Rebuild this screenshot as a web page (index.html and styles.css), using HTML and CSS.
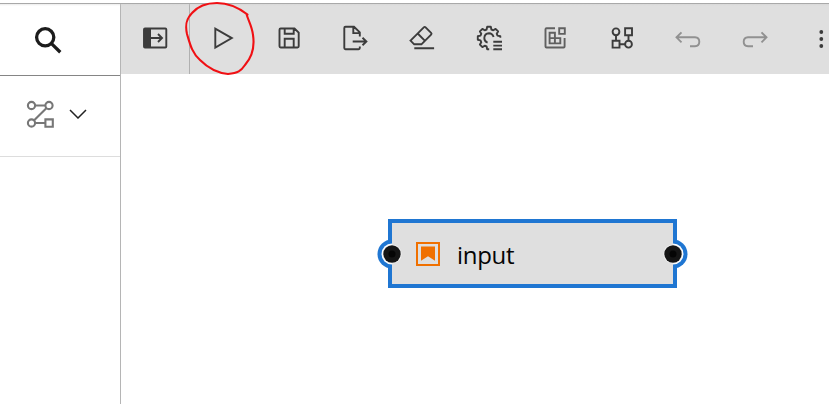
FILE: index.html
```html
<!DOCTYPE html>
<html lang="en">
<head>
<meta charset="utf-8">
<title>Flow editor</title>
<link rel="stylesheet" href="styles.css">
</head>
<body>
<div class="app">
  <aside class="sidebar">
    <div class="search">
      <svg class="icon search-icon" viewBox="0 0 32 32"><circle cx="13.2" cy="13.3" r="8.6" stroke-width="3.3"/><path d="M19.5 19.6l8.8 8.6" stroke-width="3.3"/></svg>
    </div>
    <div class="category">
      <svg class="icon route" viewBox="0 0 32 32"><circle cx="7.5" cy="7.5" r="3.6"/><circle cx="25" cy="7.5" r="3.6"/><circle cx="7.500" cy="25" r="3.6"/><path d="M11 7.500h10.400M22.300 10.200L10.200 22.300M11 25h10.300M21.400 21.400h7.400v7.400h-7.400z"/></svg>
      <svg class="chevron" viewBox="0 0 18 10"><path d="M1 1l8 8 8-8"/></svg>
    </div>
  </aside>
  <main class="main">
    <div class="toolbar">
      <button class="tool first" aria-label="Panel"><svg class="icon" viewBox="0 0 32 32"><rect x="5" y="6.500" width="22.300" height="19" rx="1"/><path class="fill" d="M5 6.500h7v19h-7z"/><path d="M12 16h11M19 12l4 4-4 4"/></svg></button>
      <button class="tool" aria-label="Run"><svg class="icon" viewBox="0 0 32 32"><path d="M9.300 6.700v18.800l16.500-9.400z"/></svg></button>
      <button class="tool" aria-label="Save"><svg class="icon" viewBox="0 0 32 32"><path d="M7.700 6.500h13.800l4.200 4.200v13.600q0 1.200-1.200 1.200H7.700q-1.200 0-1.200-1.200V7.700q0-1.200 1.200-1.200zM11.700 6.500v5.300h9V6.500M11.700 25.500v-8.800h9v8.800"/></svg></button>
      <button class="tool" aria-label="Export"><svg class="icon" viewBox="0 0 32 32"><path d="M20.800 14.500v-4.200L15 4.700H6.500q-1.200 0-1.200 1.200V26q0 1.200 1.200 1.200h13.100q1.200 0 1.200-1.200v-1.400M14.300 5v6.100h6.300M13.700 19.500h13.500M23.500 15.700l3.900 3.800-3.900 3.800"/></svg></button>
      <button class="tool" aria-label="Clear"><svg class="icon" viewBox="0 0 32 32"><path d="M4.500 18.600L17.800 5.300q.9-.9 1.800 0l5.500 5.500q.9.900 0 1.800L15.400 22.300H8.200zM11.700 11.500l7.300 7.300M8.300 26.200h19.800"/></svg></button>
      <button class="tool" aria-label="Settings"><svg class="icon" viewBox="0 0 32 32"><path d="M27.300 15.800V14.200L24.500 13.600L23.700 11.700L25.100 9.400L22.600 6.900L20.300 8.300L18.400 7.500L17.800 4.800H14.200L13.600 7.500L11.700 8.300L9.400 6.900L6.900 9.400L8.300 11.700L7.500 13.600L4.800 14.200V17.800L7.500 18.400L8.300 20.300L6.900 22.600L9.400 25.100L11.700 23.700L13.600 24.500L14.200 27.200H16.200M14.600 20.600Q11.300 19.600 11.300 16Q11.600 11.500 16 11.300Q19.400 11.400 20.600 15M20.300 19.800H29M20.300 23.600H29M20.300 27.300H29" stroke-linejoin="round"/></svg></button>
      <button class="tool dim" aria-label="Widgets"><svg class="icon" viewBox="0 0 32 32"><path d="M16 6.300H7.500q-1 0-1 1v17.200q0 1 1 1h17.100q1 0 1-1V16M20.200 6.300h5.600v5.600h-5.600zM10.600 10.700h5.300v5.400h-5.300zM10.600 16.100h5.300v5.300h-5.300zM15.900 16.100h5.400v5.300h-5.400z"/></svg></button>
      <button class="tool" aria-label="Arrange"><svg class="icon" viewBox="0 0 32 32"><circle cx="10" cy="9.800" r="3.400"/><circle cx="22.500" cy="22.200" r="3.400"/><path d="M19.100 6.300h6.900v6.900h-6.900zM6.600 18.700h6.900v6.900H6.600zM10 13.200v5.500M22.500 13.200v5.600M13.500 22.200h5.600"/></svg></button>
      <button class="tool faded" aria-label="Undo"><svg class="icon" viewBox="0 0 32 32"><path d="M4.700 15.300H23q4.300.3 4.300 4.500t-4.300 4.400h-5M9.500 10.300l-5 5 5 5"/></svg></button>
      <button class="tool faded" aria-label="Redo"><svg class="icon" viewBox="0 0 32 32"><path d="M27.300 15.300H9q-4.300.3-4.300 4.500T9 24.200h5M22.500 10.300l5 5-5 5"/></svg></button>
      <button class="tool" aria-label="More"><svg class="icon" viewBox="0 0 32 32"><g class="fill"><circle cx="15.300" cy="10" r="1.900"/><circle cx="15.300" cy="17" r="1.900"/><circle cx="15.300" cy="24" r="1.900"/></g></svg></button>
    </div>
    <div class="canvas">
      <div class="node">
        <svg class="port left" viewBox="0 0 30 30"><path class="cover" d="M15 .5a14.500 14.500 0 0 0 0 29z"/><path class="gap" d="M15 4.500a10.500 10.500 0 0 0 0 21z"/><circle class="halo" cx="15" cy="15" r="9.600"/><circle class="dot" cx="15" cy="15" r="8.700"/><circle class="core" cx="15" cy="15" r="3.500"/></svg>
        <svg class="node-icon" viewBox="0 0 24 24"><path class="frame" d="M1 1h22v22H1z"/><path class="flag" d="M5 4.500h14v14.200l-7-4.500-7 4.500z"/></svg>
        <span class="label">input</span>
        <svg class="port right" viewBox="0 0 30 30"><path class="cover" d="M15 .5a14.500 14.500 0 0 1 0 29z"/><path class="gap" d="M15 4.500a10.500 10.500 0 0 1 0 21z"/><circle class="halo" cx="15" cy="15" r="9.600"/><circle class="dot" cx="15" cy="15" r="8.700"/><circle class="core" cx="15" cy="15" r="3.500"/></svg>
      </div>
    </div>
  </main>
  <svg class="scribble" viewBox="0 0 76 80"><path d="M62.500 14.500C54 8 44 3 32 3C20 3 13 6 7 13C1 19 0 25 2 34C5 44 7 53 15 60C24 69 33 73 43 74C53 73 56 71 60 65C67 57 70 48 68 35C67 26 63 20 61.500 14"/></svg>
</div>
</body>
</html>
```
FILE: styles.css
```css
* { box-sizing: border-box; }
body { margin: 0; background: #fff; font-family: "Open Sans", "Noto Sans", sans-serif; overflow: hidden; }
.app { position: relative; width: 829px; height: 404px; padding-top: 3px; display: flex; }
.app::before { content: ""; position: absolute; top: 3px; left: 0; right: 0; height: 3px; background: linear-gradient(#a9a9a9 0 1px, #cfcfcf66 1px, transparent); z-index: 1; }
.sidebar { width: 121px; flex: none; border-right: 1px solid #b5b5b5; }
.search { height: 73px; border-bottom: 1px solid #858585; display: flex; align-items: center; padding-left: 32px; }
.category { height: 81px; border-bottom: 1px solid #ddd; display: flex; align-items: center; padding: 0 0 4px 24px; gap: 13px; }
svg { display: block; flex: none; fill: none; }
.icon { width: 32px; height: 32px; stroke: #3c3c3c; stroke-width: 1.9; }
.search-icon { margin-top: 2px; stroke: #1c1c1c; }
.route { stroke: #777; stroke-width: 2.1; }
.chevron { width: 18px; height: 10px; stroke: #222; stroke-width: 1.5; }
.main { flex: 1; min-width: 0; display: flex; flex-direction: column; }
.toolbar { height: 71px; flex: none; display: flex; background: #dfdfdf; overflow: hidden; }
.tool { width: 66.6px; flex: none; border: 0; padding: 0 2px 2px 0; background: none; display: flex; align-items: center; justify-content: center; }
.first { width: 69px; padding-right: 0; border-right: 1px solid #b0b0b0; }
.fill { fill: #3c3c3c; stroke: none; }
.dim .icon { stroke: #606060; }
.faded .icon { stroke: #919191; }
.canvas { flex: 1; padding: 145px 0 0 267px; }
.node { position: relative; width: 289px; height: 69px; border: 4px solid #1f76d2; background: #dfdfdf; display: flex; align-items: center; padding-left: 24px; gap: 17px; }
.node-icon { width: 24px; height: 24px; }
.frame { stroke: #f07000; stroke-width: 2; }
.flag { fill: #f07000; }
.label { font-size: 24px; line-height: 30px; letter-spacing: -0.3px; color: #050505; margin-top: 2px; }
.port { position: absolute; width: 30px; height: 30px; top: 15.5px; }
.left { left: -15px; }
.right { right: -15px; }
.cover { fill: #1f76d2; }
.gap { fill: #fff; }
.halo { fill: #f3f3f3; }
.dot { fill: #151515; }
.core { fill: #050505; }
.scribble { position: absolute; left: 185px; top: 0; width: 76px; height: 80px; stroke: #f01014; stroke-width: 2.1; stroke-linecap: round; z-index: 2; }
```
